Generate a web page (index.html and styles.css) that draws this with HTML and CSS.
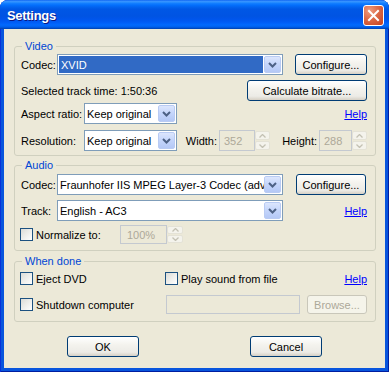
FILE: index.html
```html
<!DOCTYPE html>
<html>
<head>
<meta charset="utf-8">
<title>Settings</title>
<link rel="stylesheet" href="styles.css">
</head>
<body>
<div class="window">
  <div class="titlebar">
    <span class="title">Settings</span>
    <button class="close" aria-label="Close">
      <svg width="21" height="21" viewBox="0 0 21 21"><path d="M6 6 L15 15 M15 6 L6 15" stroke="#fff" stroke-width="2" stroke-linecap="square" fill="none"/></svg>
    </button>
  </div>
  <div class="client">
    <fieldset class="group video">
      <legend>Video</legend>
      <div class="row r1">
        <span class="lbl lbl-s">Codec:</span>
        <div class="combo combo-wide selected"><span class="sel">XVID</span><span class="drop"><svg width="9" height="6" viewBox="0 0 9 6"><path d="M1 1 L4.5 4.5 L8 1" stroke="#4D6185" stroke-width="2" fill="none"/></svg></span></div>
        <button class="btn btn-config">Configure...</button>
      </div>
      <div class="row r2">
        <span>Selected track time: 1:50:36</span>
        <button class="btn btn-calc">Calculate bitrate...</button>
      </div>
      <div class="row r3">
        <span class="lbl lbl-l">Aspect ratio:</span>
        <div class="combo combo-small"><span class="val">Keep original</span><span class="drop"><svg width="9" height="6" viewBox="0 0 9 6"><path d="M1 1 L4.5 4.5 L8 1" stroke="#4D6185" stroke-width="2" fill="none"/></svg></span></div>
        <a class="help" href="#">Help</a>
      </div>
      <div class="row r4">
        <span class="lbl lbl-l">Resolution:</span>
        <div class="combo combo-small"><span class="val">Keep original</span><span class="drop"><svg width="9" height="6" viewBox="0 0 9 6"><path d="M1 1 L4.5 4.5 L8 1" stroke="#4D6185" stroke-width="2" fill="none"/></svg></span></div>
        <span class="dim-lbl w-lbl">Width:</span>
        <span class="edit dis w-in">352</span>
        <span class="spin"><span class="sb"><svg width="7" height="4" viewBox="0 0 7 4"><path d="M0.5 3.5 L3.5 0.5 L6.5 3.5" stroke="#C3C1B3" stroke-width="1.3" fill="none"/></svg></span><span class="sb"><svg width="7" height="4" viewBox="0 0 7 4"><path d="M0.5 0.5 L3.5 3.5 L6.5 0.5" stroke="#C3C1B3" stroke-width="1.3" fill="none"/></svg></span></span>
        <span class="dim-lbl h-lbl">Height:</span>
        <span class="edit dis h-in">288</span>
        <span class="spin"><span class="sb"><svg width="7" height="4" viewBox="0 0 7 4"><path d="M0.5 3.5 L3.5 0.5 L6.5 3.5" stroke="#C3C1B3" stroke-width="1.3" fill="none"/></svg></span><span class="sb"><svg width="7" height="4" viewBox="0 0 7 4"><path d="M0.5 0.5 L3.5 3.5 L6.5 0.5" stroke="#C3C1B3" stroke-width="1.3" fill="none"/></svg></span></span>
      </div>
    </fieldset>

    <fieldset class="group audio">
      <legend>Audio</legend>
      <div class="row a1">
        <span class="lbl lbl-s">Codec:</span>
        <div class="combo combo-wide"><span class="val">Fraunhofer IIS MPEG Layer-3 Codec (advanced)</span><span class="drop"><svg width="9" height="6" viewBox="0 0 9 6"><path d="M1 1 L4.5 4.5 L8 1" stroke="#4D6185" stroke-width="2" fill="none"/></svg></span></div>
        <button class="btn btn-config2">Configure...</button>
      </div>
      <div class="row a2">
        <span class="lbl lbl-s">Track:</span>
        <div class="combo combo-wide"><span class="val">English - AC3</span><span class="drop"><svg width="9" height="6" viewBox="0 0 9 6"><path d="M1 1 L4.5 4.5 L8 1" stroke="#4D6185" stroke-width="2" fill="none"/></svg></span></div>
        <a class="help" href="#">Help</a>
      </div>
      <div class="row a3">
        <label class="check norm"><span class="box"></span><span>Normalize to:</span></label>
        <span class="edit dis n-in">100%</span>
        <span class="spin spin-n"><span class="sb"><svg width="7" height="4" viewBox="0 0 7 4"><path d="M0.5 3.5 L3.5 0.5 L6.5 3.5" stroke="#C3C1B3" stroke-width="1.3" fill="none"/></svg></span><span class="sb"><svg width="7" height="4" viewBox="0 0 7 4"><path d="M0.5 0.5 L3.5 3.5 L6.5 0.5" stroke="#C3C1B3" stroke-width="1.3" fill="none"/></svg></span></span>
      </div>
    </fieldset>

    <fieldset class="group done">
      <legend>When done</legend>
      <div class="row d1">
        <label class="check col1"><span class="box"></span><span>Eject DVD</span></label>
        <label class="check"><span class="box"></span><span>Play sound from file</span></label>
        <a class="help" href="#">Help</a>
      </div>
      <div class="row d2">
        <label class="check col1"><span class="box"></span><span>Shutdown computer</span></label>
        <span class="edit dis path-in"></span>
        <button class="btn btn-browse" disabled>Browse...</button>
      </div>
    </fieldset>

    <div class="actions">
      <button class="btn btn-main">OK</button>
      <button class="btn btn-main">Cancel</button>
    </div>
  </div>
</div>
</body>
</html>
```
FILE: styles.css
```css
html, body {
  margin: 0;
  padding: 0;
  background: #ffffff;
}
body {
  width: 389px;
  height: 372px;
  overflow: hidden;
  font-family: "Liberation Sans", Arial, sans-serif;
  font-size: 11px;
  color: #000;
}
.window {
  width: 389px;
  height: 372px;
  display: flex;
  flex-direction: column;
  background: #0855DD;
  border-radius: 8px 8px 0 0;
  overflow: hidden;
  box-shadow: inset 1px 0 #0831D9, inset -1px 0 #001EA0, inset 0 -1px #001EA0;
}
.titlebar {
  flex: none;
  height: 29px;
  display: flex;
  align-items: center;
  padding: 0 5px 0 7px;
  box-sizing: border-box;
  background: linear-gradient(to bottom, #0A5FF0 0%, #3A93FF 4%, #288EFF 8%, #127DFF 12%, #036FFC 18%, #0262EE 25%, #0057E5 32%, #0054E3 56%, #0055EB 66%, #005BF5 76%, #026AFE 86%, #0062EF 92%, #0052D6 96%, #0040AB 100%);
}
.title {
  flex: 1;
  color: #fff;
  font-family: "Liberation Sans", Arial, sans-serif;
  font-weight: bold;
  font-size: 13px;
  letter-spacing: -0.3px;
  text-shadow: 1px 1px 0 #0A1883;
  margin-top: 1px;
}
.close {
  width: 21px;
  height: 21px;
  padding: 0;
  margin: 1px 0 0 0;
  border: 1px solid #fff;
  border-radius: 3px;
  background: radial-gradient(circle at 30% 25%, #EE9C80 0%, #DC6A48 45%, #C5401F 100%);
  display: flex;
  align-items: center;
  justify-content: center;
  box-sizing: border-box;
}
.close svg { display: block; margin: -1px; }

.client {
  flex: 1;
  margin: 0 4px 4px 4px;
  background: #ECE9D8;
  padding: 11px 9px 0 10px;
  box-sizing: border-box;
  display: flex;
  flex-direction: column;
}
.group {
  margin: 0;
  border: 1px solid #D0D0BF;
  border-radius: 3px;
  padding: 1px 8px 4px 6px;
  min-width: 0;
}
.group legend {
  color: #0046D5;
  line-height: 13px;
  padding: 0 3px;
  margin-left: 1px;
}
.audio { margin-top: 3px; padding-top: 2px; padding-bottom: 5px; }
.done { margin-top: 4px; padding-top: 0; padding-bottom: 6px; }

.row {
  display: flex;
  align-items: center;
  height: 21px;
}
.r2 { margin-top: 5px; }
.r3 { margin-top: 2px; }
.r4 { margin-top: 6px; }
.a2 { margin-top: 5px; }
.a3 { margin-top: 3px; }
.d1 { margin-top: 2px; height: 17px; }
.d2 { margin-top: 7px; }

.lbl { flex: none; white-space: nowrap; }
.lbl-s { width: 36px; }
.lbl-l { width: 63px; }

.combo {
  flex: none;
  height: 21px;
  box-sizing: border-box;
  border: 1px solid #7F9DB9;
  background: #fff;
  display: flex;
  align-items: center;
  position: relative;
  overflow: hidden;
}
.combo-wide { width: 226px; }
.combo-small { width: 93px; }
.combo .val {
  flex: 1;
  padding-left: 2px;
  white-space: nowrap;
  overflow: hidden;
}
.combo .sel {
  flex: 1;
  align-self: stretch;
  margin: 1px 1px 1px 1px;
  background: #316AC5;
  color: #fff;
  padding-left: 2px;
  display: flex;
  align-items: center;
}
.combo .drop {
  flex: none;
  width: 17px;
  align-self: stretch;
  margin: 1px 1px 1px 0;
  box-sizing: border-box;
  border: 1px solid #B9CBF3;
  border-radius: 2px;
  background: linear-gradient(to bottom, #DCE6FD 0%, #C4D5FB 50%, #B4C8F6 100%);
  display: flex;
  align-items: center;
  justify-content: center;
}
.combo .drop svg { display: block; }

.btn {
  flex: none;
  font-family: "Liberation Sans", Arial, sans-serif;
  font-size: 11px;
  color: #000;
  height: 21px;
  padding: 0;
  box-sizing: border-box;
  border: 1px solid #003C74;
  border-radius: 3px;
  background: linear-gradient(to bottom, #FFFFFF 0%, #F4F3EE 40%, #ECEBE6 80%, #D6D0C5 100%);
}
.btn-config { width: 72px; margin-left: auto; }
.btn-config2 { width: 70px; margin-left: auto; margin-right: 1px; }
.btn-calc { width: 120px; margin-left: auto; }
.btn-browse {
  width: 60px;
  height: 19px;
  margin-left: auto;
  border-color: #C9C7BA;
  background: #F5F4EA;
  color: #ACA899;
}
.help {
  margin-left: auto;
  color: #0000FF;
  text-decoration: underline;
}

.dim-lbl {
  flex: none;
  text-align: right;
  padding-right: 2px;
  box-sizing: border-box;
  white-space: nowrap;
}
.w-lbl { width: 42px; }
.h-lbl { width: 49px; }

.edit {
  flex: none;
  height: 21px;
  box-sizing: border-box;
  border: 1px solid #7F9DB9;
  background: #fff;
  display: flex;
  align-items: center;
  padding-left: 4px;
}
.edit.dis {
  border-color: #C4C9D0;
  background: #ECE9D8;
  color: #ACA899;
}
.w-in { width: 36px; }
.h-in { width: 33px; }
.n-in { width: 47px; height: 19px; padding-left: 6px; }
.path-in { width: 134px; height: 19px; }

.spin {
  flex: none;
  width: 15px;
  height: 21px;
  display: flex;
  flex-direction: column;
  gap: 1px;
  padding: 1px 0;
  box-sizing: border-box;
}
.spin-n { width: 16px; height: 19px; }
.spin .sb {
  flex: 1;
  box-sizing: border-box;
  border: 1px solid #E4E2D6;
  border-radius: 2px;
  background: #F4F3EC;
  display: flex;
  align-items: center;
  justify-content: center;
}
.spin svg { display: block; }

.check {
  flex: none;
  display: flex;
  align-items: center;
  white-space: nowrap;
}
.check .box {
  flex: none;
  width: 13px;
  height: 13px;
  box-sizing: border-box;
  border: 1px solid #1C5180;
  background: linear-gradient(135deg, #DCDCD7 0%, #F2F2EF 60%, #FFFFFF 100%);
  margin-left: -1px;
  margin-right: 3px;
}
.norm { width: 99px; }
.col1 { width: 145px; }

.actions {
  display: flex;
  justify-content: center;
  gap: 111px;
  margin-top: 14px;
  margin-right: -9px;
  margin-left: -10px;
}
.btn-main { width: 72px; }
```
